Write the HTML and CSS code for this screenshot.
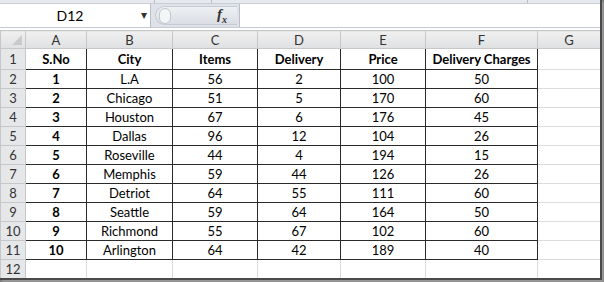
FILE: index.html
```html
<!DOCTYPE html>
<html lang="en">
<head>
    <meta charset="UTF-8">
    <title>Delivery Sheet</title>
    <link rel="stylesheet" href="styles.css">
</head>
<body>
<div class="window">
    <div class="top-strip">
        <span class="tick t1"></span>
        <span class="tick t2"></span>
        <span class="tick t3"></span>
    </div>

    <div class="formula-bar">
        <div class="name-box">
            <span class="cell-ref">D12</span>
            <span class="drop">&#9662;</span>
        </div>
        <div class="fx-pill">
            <span class="knob"></span>
            <span class="fx"><i>f</i><sub>x</sub></span>
        </div>
        <div class="formula-input"></div>
    </div>

    <table class="sheet">
        <colgroup>
            <col class="c-rh">
            <col class="c-a">
            <col class="c-b">
            <col class="c-c">
            <col class="c-d">
            <col class="c-e">
            <col class="c-f">
            <col class="c-g">
        </colgroup>
        <tr class="col-heads">
            <th class="corner"><span class="tri"></span></th>
            <th>A</th><th>B</th><th>C</th><th>D</th><th>E</th><th>F</th><th>G</th>
        </tr>
        <tr class="r1">
            <th class="rh">1</th>
            <td class="d b">S.No</td>
            <td class="d b">City</td>
            <td class="d b">Items</td>
            <td class="d b">Delivery</td>
            <td class="d b">Price</td>
            <td class="d b">Delivery Charges</td>
            <td></td>
        </tr>
        <tr><th class="rh">2</th><td class="d b">1</td><td class="d">L.A</td><td class="d">56</td><td class="d">2</td><td class="d">100</td><td class="d">50</td><td></td></tr>
        <tr><th class="rh">3</th><td class="d b">2</td><td class="d">Chicago</td><td class="d">51</td><td class="d">5</td><td class="d">170</td><td class="d">60</td><td></td></tr>
        <tr><th class="rh">4</th><td class="d b">3</td><td class="d">Houston</td><td class="d">67</td><td class="d">6</td><td class="d">176</td><td class="d">45</td><td></td></tr>
        <tr><th class="rh">5</th><td class="d b">4</td><td class="d">Dallas</td><td class="d">96</td><td class="d">12</td><td class="d">104</td><td class="d">26</td><td></td></tr>
        <tr><th class="rh">6</th><td class="d b">5</td><td class="d">Roseville</td><td class="d">44</td><td class="d">4</td><td class="d">194</td><td class="d">15</td><td></td></tr>
        <tr><th class="rh">7</th><td class="d b">6</td><td class="d">Memphis</td><td class="d">59</td><td class="d">44</td><td class="d">126</td><td class="d">26</td><td></td></tr>
        <tr><th class="rh">8</th><td class="d b">7</td><td class="d">Detriot</td><td class="d">64</td><td class="d">55</td><td class="d">111</td><td class="d">60</td><td></td></tr>
        <tr><th class="rh">9</th><td class="d b">8</td><td class="d">Seattle</td><td class="d">59</td><td class="d">64</td><td class="d">164</td><td class="d">50</td><td></td></tr>
        <tr><th class="rh">10</th><td class="d b">9</td><td class="d">Richmond</td><td class="d">55</td><td class="d">67</td><td class="d">102</td><td class="d">60</td><td></td></tr>
        <tr><th class="rh">11</th><td class="d b">10</td><td class="d">Arlington</td><td class="d">64</td><td class="d">42</td><td class="d">189</td><td class="d">40</td><td></td></tr>
        <tr><th class="rh">12</th><td></td><td></td><td></td><td></td><td></td><td></td><td></td></tr>
    </table>
</div>
</body>
</html>
```

FILE: styles.css
```css
body {
    margin: 0;
    width: 604px;
    height: 282px;
    background: #7a7a7a;
    overflow: hidden;
    font-family: Lato, "Open Sans", sans-serif;
    color: #000;
}
.window {
    width: 600px;
    height: 278px;
    background: #fff;
    border-right: 2px solid #4a4a4a;
    border-bottom: 2px solid #4a4a4a;
    box-shadow: 2px 2px 2px #9a9a9a;
    overflow: hidden;
}
.top-strip {
    height: 3px;
    background: #e6e9ee;
    border-bottom: 1px solid #c9ced6;
    position: relative;
}
.tick {
    position: absolute;
    top: 0;
    width: 1px;
    height: 3px;
    background: #b8bec8;
}
.t1 { left: 154px; }
.t2 { left: 211px; }
.t3 { left: 527px; }
.formula-bar {
    display: flex;
    height: 23px;
    background: #dfe3e9;
    border-bottom: 1px solid #c5cad2;
}
.name-box {
    width: 150px;
    background: #fff;
    border-right: 1px solid #b9bfc8;
    display: flex;
    align-items: center;
    position: relative;
}
.cell-ref {
    width: 140px;
    text-align: center;
    font-size: 14px;
}
.drop {
    position: absolute;
    right: 3px;
    top: 3px;
    font-size: 12px;
    color: #333;
}
.fx-pill {
    width: 82px;
    margin: 2px 2px 2px 4px;
    border-radius: 10px 0 0 10px;
    background: linear-gradient(#eef0f3, #dadee4);
    border: 1px solid #c6cbd3;
    border-right: none;
    display: flex;
    align-items: center;
    justify-content: space-between;
    padding: 0 10px 0 3px;
    box-sizing: border-box;
}
.knob {
    width: 10px;
    height: 14px;
    border-radius: 6px;
    border: 1px solid #c2c7cf;
    background: #f4f5f7;
}
.fx {
    font-family: "Liberation Serif", serif;
    font-size: 15px;
    font-weight: bold;
    color: #333;
}
.fx sub {
    font-size: 10px;
    font-style: italic;
}
.formula-input {
    flex: 1;
    background: #fff;
    border-left: 1px solid #b9bfc8;
}
.sheet {
    margin-top: 2px;
    border-collapse: collapse;
    table-layout: fixed;
    width: 600px;
    font-size: 13px;
}
.c-rh { width: 25px; }
.c-a { width: 61px; }
.c-b { width: 86px; }
.c-c { width: 85px; }
.c-d { width: 83px; }
.c-e { width: 85px; }
.c-f { width: 112px; }
.c-g { width: 63px; }
.sheet td, .sheet th {
    border: 1px solid #dadcdd;
    padding: 0;
    height: 18px;
    text-align: center;
    overflow: hidden;
    white-space: nowrap;
}
.col-heads th {
    height: 17px;
    background: linear-gradient(#f0f0f0, #dfe0e2);
    border-color: #c5c7ca;
    font-weight: normal;
    color: #333;
}
.sheet th.rh {
    background: #e6e7e9;
    border-color: #c5c7ca;
    font-weight: normal;
    color: #333;
}
.corner {
    position: relative;
}
.tri {
    position: absolute;
    right: 3px;
    bottom: 3px;
    width: 0;
    height: 0;
    border-left: 10px solid transparent;
    border-bottom: 10px solid #c8cacd;
}
.r1 td, .r1 th {
    height: 20px;
}
.sheet td.d {
    border: 1px solid #2a2a2a;
}
.b {
    font-weight: bold;
}
```
